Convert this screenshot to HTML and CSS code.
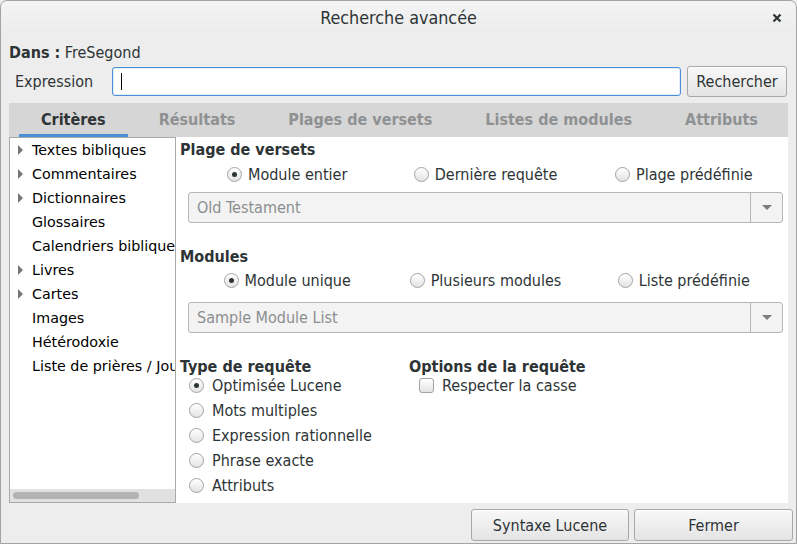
FILE: index.html
```html
<!DOCTYPE html>
<html lang="fr">
<head>
<meta charset="utf-8">
<title>Recherche avancée</title>
<link rel="stylesheet" href="styles.css">
</head>
<body>
<div class="window">
  <div class="titlebar">
    <span class="title">Recherche avancée</span>
    <span class="close">
      <svg width="10" height="10" viewBox="0 0 10 10"><path d="M1.5 1.5 L8.5 8.5 M8.5 1.5 L1.5 8.5" stroke="#2e3436" stroke-width="2.2" stroke-linecap="butt"/></svg>
    </span>
  </div>
  <div class="dans"><b>Dans :</b> FreSegond</div>
  <div class="exprrow">
    <span class="exprlabel">Expression</span>
    <div class="entry"><span class="caret"></span></div>
    <button class="btn btn-search">Rechercher</button>
  </div>
  <div class="notebook">
    <div class="tabs">
      <div class="tab active">Critères</div>
      <div class="tab">Résultats</div>
      <div class="tab">Plages de versets</div>
      <div class="tab">Listes de modules</div>
      <div class="tab">Attributs</div>
    </div>
    <div class="page">
      <div class="tree">
        <div class="treelist">
          <div class="node"><span class="arrow"></span>Textes bibliques</div>
          <div class="node"><span class="arrow"></span>Commentaires</div>
          <div class="node"><span class="arrow"></span>Dictionnaires</div>
          <div class="node"><span class="noarrow"></span>Glossaires</div>
          <div class="node"><span class="noarrow"></span>Calendriers bibliques</div>
          <div class="node"><span class="arrow"></span>Livres</div>
          <div class="node"><span class="arrow"></span>Cartes</div>
          <div class="node"><span class="noarrow"></span>Images</div>
          <div class="node"><span class="noarrow"></span>Hétérodoxie</div>
          <div class="node"><span class="noarrow"></span>Liste de prières / Journal</div>
        </div>
        <div class="hscroll"><div class="thumb"></div></div>
      </div>
      <div class="criteria">
        <div class="heading h-plage">Plage de versets</div>
        <div class="radiorow">
          <label class="opt"><span class="radio checked"></span>Module entier</label>
          <label class="opt"><span class="radio"></span>Dernière requête</label>
          <label class="opt"><span class="radio"></span>Plage prédéfinie</label>
        </div>
        <div class="combo combo1"><span class="combotext">Old Testament</span><span class="combobtn"><span class="tri"></span></span></div>
        <div class="heading h-mod">Modules</div>
        <div class="radiorow rr2">
          <label class="opt"><span class="radio checked"></span>Module unique</label>
          <label class="opt"><span class="radio"></span>Plusieurs modules</label>
          <label class="opt"><span class="radio"></span>Liste prédéfinie</label>
        </div>
        <div class="combo combo2"><span class="combotext">Sample Module List</span><span class="combobtn"><span class="tri"></span></span></div>
        <div class="bottomcols">
          <div class="col col-type">
            <div class="heading colhead">Type de requête</div>
            <div class="optlist">
              <label class="opt2"><span class="radio checked"></span>Optimisée Lucene</label>
              <label class="opt2"><span class="radio"></span>Mots multiples</label>
              <label class="opt2"><span class="radio"></span>Expression rationnelle</label>
              <label class="opt2"><span class="radio"></span>Phrase exacte</label>
              <label class="opt2"><span class="radio"></span>Attributs</label>
            </div>
          </div>
          <div class="col col-opts">
            <div class="heading colhead">Options de la requête</div>
            <div class="optlist">
              <label class="opt2 optcheck"><span class="check"></span>Respecter la casse</label>
            </div>
          </div>
        </div>
      </div>
    </div>
  </div>
  <div class="actions">
    <button class="btn btn-syntax">Syntaxe Lucene</button>
    <button class="btn btn-close">Fermer</button>
  </div>
</div>
</body>
</html>
```
FILE: styles.css
```css
html, body {
  margin: 0;
  padding: 0;
  background: #ededed;
}
.window {
  width: 797px;
  height: 544px;
  box-sizing: border-box;
  border: 1px solid #a3a3a3;
  border-radius: 7px 7px 0 0;
  background: #ededed;
  font-family: "DejaVu Sans Condensed", "DejaVu Sans", sans-serif;
  font-stretch: condensed;
  font-size: 16px;
  color: #2e3436;
  overflow: hidden;
  display: flex;
  flex-direction: column;
}
.titlebar {
  height: 32px;
  display: flex;
  align-items: center;
  justify-content: center;
  position: relative;
  background: linear-gradient(#f4f4f4, #ececec);
  border-radius: 7px 7px 0 0;
}
.title {
  font-size: 17.8px;
  color: #2e3436;
}
.close {
  position: absolute;
  right: 14px;
  top: 12px;
  width: 10px;
  height: 10px;
  display: flex;
}
.dans {
  height: 20px;
  line-height: 20px;
  padding-left: 8px;
  margin-top: 10px;
}
.dans b {
  font-weight: bold;
}
.exprrow {
  display: flex;
  align-items: center;
  height: 30px;
  margin-top: 3px;
}
.exprlabel {
  margin-left: 14px;
  width: 97px;
}
.entry {
  width: 567px;
  height: 27px;
  border: 1px solid #4a90d9;
  border-radius: 3px;
  background: #fff;
  display: flex;
  align-items: center;
  box-shadow: inset 0 0 0 1px rgba(74,144,217,0.15);
}
.caret {
  display: block;
  width: 1px;
  height: 17px;
  background: #000;
  margin-left: 8px;
}
.btn {
  font-family: inherit;
  font-stretch: condensed;
  font-size: 16px;
  color: #2e3436;
  border: 1px solid #a8a8a8;
  border-radius: 3px;
  background: linear-gradient(#f8f8f8, #e4e4e4);
  padding: 0;
  box-shadow: inset 0 1px #fff;
}
.btn-search {
  margin-left: 6px;
  width: 100px;
  height: 31px;
}
.notebook {
  margin-left: 8px;
  margin-top: 7px;
  width: 779px;
  display: flex;
  flex-direction: column;
}
.tabs {
  height: 34px;
  background: #d6d6d6;
  display: flex;
  padding-left: 10px;
  gap: 9px;
  box-sizing: border-box;
  white-space: nowrap;
}
.tab {
  padding: 0 22px;
  font-weight: bold;
  font-size: 16px;
  line-height: 33px;
  color: #8f9192;
  border-bottom: 3px solid transparent;
  box-sizing: border-box;
  height: 34px;
  flex: none;
}
.tab.active {
  color: #2e3436;
  border-bottom-color: #4a90d9;
}
.page {
  height: 366px;
  background: #fff;
  display: flex;
}
.tree {
  width: 167px;
  box-sizing: border-box;
  border: 1px solid #a9a9a9;
  display: flex;
  flex-direction: column;
  overflow: hidden;
}
.treelist {
  flex: 1;
  font-family: "DejaVu Sans", sans-serif;
  font-stretch: normal;
  font-size: 14.3px;
  color: #000;
  white-space: nowrap;
  overflow: hidden;
}
.node {
  height: 24px;
  line-height: 24px;
  display: flex;
  align-items: center;
}
.arrow {
  display: inline-block;
  flex: none;
  width: 0;
  height: 0;
  margin-left: 8px;
  margin-right: 9px;
  border-top: 5px solid transparent;
  border-bottom: 5px solid transparent;
  border-left: 5px solid #787878;
}
.noarrow {
  display: inline-block;
  flex: none;
  width: 22px;
}
.hscroll {
  height: 13px;
  background: #e1e1e1;
  display: flex;
  align-items: center;
  padding-left: 3px;
}
.thumb {
  width: 126px;
  height: 7px;
  border-radius: 4px;
  background: #b3b3b3;
}
.criteria {
  flex: 1;
  padding-left: 4px;
  display: flex;
  flex-direction: column;
}
.heading {
  font-weight: bold;
  font-size: 16px;
  height: 22px;
  line-height: 22px;
}
.h-plage {
  margin-top: 2px;
}
.h-mod {
  margin-top: 23px;
}
.radiorow {
  margin-left: 8px;
  margin-top: 1px;
  width: 595px;
  display: grid;
  grid-template-columns: 1fr 1fr 1fr;
  justify-items: center;
  height: 24px;
  align-items: center;
}
.rr2 {
  margin-top: 0;
}
.opt, .opt2 {
  display: flex;
  align-items: center;
  white-space: nowrap;
}
.radio, .check {
  display: inline-block;
  box-sizing: border-box;
  width: 15px;
  height: 15px;
  border: 1px solid #a3a3a3;
  background: linear-gradient(#ffffff, #e3e3e3);
  margin-right: 6px;
  position: relative;
  flex: none;
}
.radio {
  border-radius: 50%;
}
.radio.checked::after {
  content: "";
  position: absolute;
  left: 4px;
  top: 4px;
  width: 5px;
  height: 5px;
  border-radius: 50%;
  background: #2e3436;
}
.check {
  border-radius: 3px;
}
.combo {
  margin-left: 8px;
  width: 595px;
  height: 31px;
  box-sizing: border-box;
  border: 1px solid #b6b6b3;
  border-radius: 3px;
  background: #f3f3f3;
  display: flex;
  align-items: center;
}
.combo1 {
  margin-top: 6px;
}
.combo2 {
  margin-top: 10px;
}
.combotext {
  flex: 1;
  padding-left: 8px;
  color: #8b8e8f;
}
.combobtn {
  width: 31px;
  height: 29px;
  border-left: 1px solid #b6b6b3;
  display: flex;
  align-items: center;
  justify-content: center;
}
.tri {
  width: 0;
  height: 0;
  border-left: 5px solid transparent;
  border-right: 5px solid transparent;
  border-top: 5px solid #7a7d7e;
}
.bottomcols {
  display: flex;
  margin-top: 24px;
}
.col-type {
  width: 229px;
}
.colhead {
  height: 20px;
  line-height: 20px;
}
.optlist {
  margin-top: -4px;
  display: flex;
  flex-direction: column;
}
.opt2 {
  height: 25px;
  margin-left: 9px;
}
.opt2 .radio, .opt2 .check {
  margin-right: 8px;
}
.optcheck {
  margin-left: 10px;
}
.actions {
  display: flex;
  justify-content: flex-end;
  gap: 5px;
  padding-right: 3px;
  margin-top: 6px;
}
.btn-syntax {
  width: 158px;
  height: 32px;
}
.btn-close {
  width: 159px;
  height: 32px;
}
```
